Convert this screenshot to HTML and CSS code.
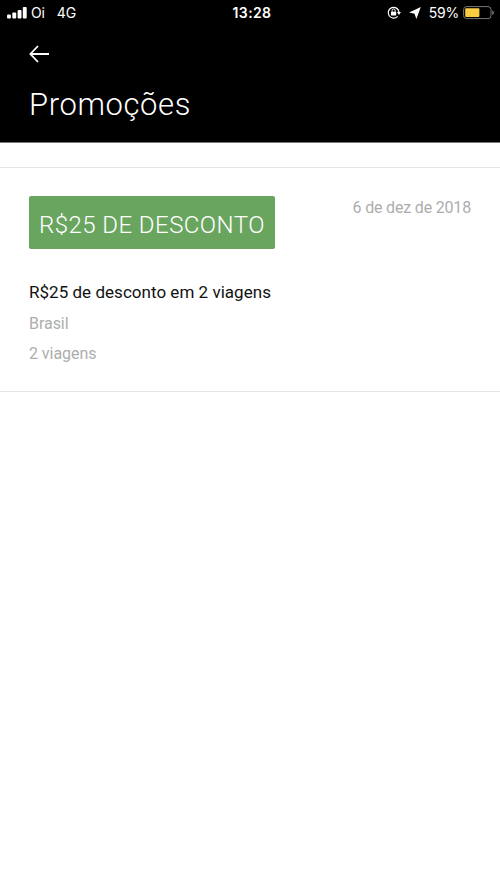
FILE: index.html
```
<!DOCTYPE html>
<html lang="pt-BR">
<head>
<meta charset="utf-8">
<title>Promoções</title>
<link rel="stylesheet" href="styles.css">
</head>
<body>
<header class="header">
  <div class="status">
    <div class="carrier">
      <svg class="signal" width="20" height="12" viewBox="0 0 20 12" fill="#fff"><rect x="0" y="7.5" width="3.9" height="4" rx="1"/><rect x="5.3" y="5.5" width="3.9" height="6" rx="1"/><rect x="10.6" y="3" width="3.9" height="8.5" rx="1"/><rect x="15.8" y="0" width="3.9" height="11.5" rx="1"/></svg>
      <span class="operator">Oi</span><span class="network">4G</span>
    </div>
    <div class="clock">13:28</div>
    <div class="indicators">
      <svg class="lock" width="14" height="14" viewBox="0 0 14 14" fill="none" stroke="#fff"><path d="M10.6 10.4A5.4 5.4 0 1 1 12 6.1" stroke-width="1.2"/><path d="M9.9 6.1h4L12 8.9z" fill="#fff" stroke="none"/><rect x="4" y="5.7" width="5.2" height="3.8" rx=".4" fill="#fff" stroke="none"/><path d="M5.1 6V4.5a1.5 1.5 0 0 1 3 0V6" stroke-width="1"/></svg>
      <svg class="location" width="12" height="12" viewBox="0 0 12 12" fill="#fff"><path d="M11.8.1 7.4 11.9 5.5 6.7.1 5.4z"/></svg>
      <span class="percent">59%</span>
      <svg class="battery" width="32" height="14" viewBox="0 0 32 14"><rect x=".6" y=".6" width="27.4" height="12" rx="3" fill="none" stroke="#777" stroke-width="1"/><rect x="2.2" y="2.2" width="14.2" height="8.8" rx="1" fill="#f9cd42"/><path d="M29.2 4.5q1.8.6 1.8 2.2T29.2 8.9z" fill="#777"/></svg>
    </div>
  </div>
  <svg class="back" width="20" height="18" viewBox="0 0 20 18" fill="none" stroke="#fff" stroke-width="1.8"><path d="M9 1 1.4 9 9 17M1.4 9H20"/></svg>
  <h1 class="title">Promoções</h1>
</header>
<main>
  <article class="promo">
    <div class="top">
      <div class="badge"><span class="badge-text">R$25 DE DESCONTO</span></div>
      <time class="date">6 de dez de 2018</time>
    </div>
    <p class="summary">R$25 de desconto em 2 viagens</p>
    <p class="detail place">Brasil</p>
    <p class="detail trips">2 viagens</p>
  </article>
</main>
</body>
</html>
```
FILE: styles.css
```
* { box-sizing: border-box; margin: 0; }
body { background: #fff; font-family: Roboto, "Liberation Sans", sans-serif; min-height: 889px; }
.header { height: 143px; background: #000; color: #fff; border-bottom: 1px solid #777; }
.status { display: grid; grid-template-columns: 1fr auto 1fr; height: 26px; align-items: center; font: 400 14px/26px Inter, sans-serif; padding: 0 5px 0 7px; }
.carrier, .indicators { display: flex; align-items: center; }
.indicators { justify-content: flex-end; }
.operator { margin-left: 4px; letter-spacing: -.2px; }
.network { margin-left: 12px; letter-spacing: -.1px; }
.clock { font-weight: 600; letter-spacing: .4px; padding-left: 2px; }
.location { margin: 0 8px 0 8px; }
.percent { letter-spacing: -.2px; }
.battery { margin-left: 4px; }
.back { display: block; margin: 19px 0 0 29px; }
.title { margin: 22px 0 0 29px; font-size: 31px; line-height: 39px; font-weight: 350; letter-spacing: .6px; white-space: nowrap; }
.promo { margin-top: 24px; height: 225px; border: solid #e6e6e6; border-width: 1px 0; padding: 28px 29px 0; }
.top { display: flex; justify-content: space-between; }
.badge { width: 246px; height: 53px; border-radius: 2px; background: #6aa560; color: #fff; font-size: 24px; font-weight: 330; letter-spacing: .45px; line-height: 58px; padding-left: 10px; white-space: nowrap; }
.date { color: #adadad; font-size: 16px; line-height: 24px; letter-spacing: -.18px; }
.summary { margin-top: 31px; color: #111; font-size: 17px; line-height: 24px; letter-spacing: .03px; }
.detail { color: #adadad; font-size: 16px; line-height: 24px; letter-spacing: -.05px; }
.place { margin-top: 8px; }
.trips { margin-top: 6px; }
```
